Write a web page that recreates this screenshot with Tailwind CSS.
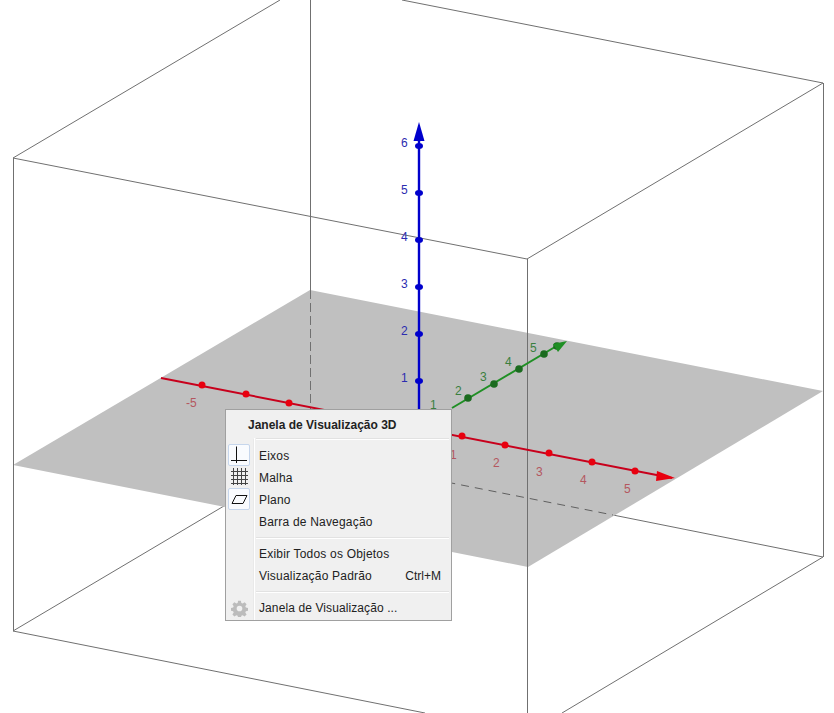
<!DOCTYPE html>
<html lang="en">
<head>
  <meta charset="UTF-8" />
  <title>Janela de Visualização 3D</title>
  <script src="https://cdn.jsdelivr.net/npm/@tailwindcss/browser@4"></script>
</head>
<body class="bg-white overflow-hidden">
<div class="relative w-[834px] h-[713px] overflow-hidden bg-white font-['Liberation_Sans',sans-serif]">

  <!-- 3D view -->
  <svg class="absolute inset-0" width="834" height="713" viewBox="0 0 834 713">
    <!-- box, back edges -->
    <g fill="none" stroke="#707070" stroke-width="1">
      <line x1="310.5" y1="0" x2="310.5" y2="290" />
      <line x1="13" y1="158" x2="280" y2="0" />
      <line x1="402" y1="0" x2="823" y2="83" />
      <line x1="13" y1="631" x2="310" y2="455" />
      <line x1="613" y1="515" x2="823" y2="557" />
    </g>

    <!-- xOy plane -->
    <polygon points="310,290 823,391 528,567 13,465" fill="#c0c0c0" />
    <line x1="310.5" y1="290" x2="310.5" y2="410" stroke="#707070" stroke-dasharray="9 4" />
    <line x1="310" y1="455" x2="613" y2="515" stroke="#606060" stroke-dasharray="8 6" />

    <!-- box, front edges -->
    <g fill="none" stroke="#707070" stroke-width="1">
      <line x1="13.5" y1="158" x2="13.5" y2="631" />
      <line x1="823.5" y1="83" x2="823.5" y2="557" />
      <line x1="527.5" y1="259" x2="527.5" y2="713" />
      <line x1="13" y1="158" x2="527" y2="259" />
      <line x1="527" y1="259" x2="823" y2="83" />
      <line x1="13" y1="631" x2="425" y2="713" />
      <line x1="562" y1="713" x2="823" y2="557" />
    </g>

    <!-- x axis -->
    <g fill="#e8000f">
      <line x1="161" y1="378" x2="672" y2="478" stroke="#c8001c" stroke-width="2" />
      <circle cx="202" cy="385" r="3.500" />
      <circle cx="246" cy="394" r="3.500" />
      <circle cx="289" cy="403" r="3.500" />
      <circle cx="462" cy="436" r="3.500" />
      <circle cx="505" cy="445" r="3.500" />
      <circle cx="549" cy="453" r="3.500" />
      <circle cx="592" cy="462" r="3.500" />
      <circle cx="635" cy="471" r="3.500" />
      <polygon points="675,478 657,471 656,481" />
    </g>
    <g fill="#b4575f" font-size="12">
      <text x="186" y="407">-5</text>
      <text x="450" y="459">1</text>
      <text x="493" y="467">2</text>
      <text x="536" y="476">3</text>
      <text x="580" y="484">4</text>
      <text x="624" y="493">5</text>
    </g>

    <!-- y axis -->
    <g fill="#1b6b1f">
      <line x1="452" y1="408" x2="560" y2="344" stroke="#1f8f24" stroke-width="2" />
      <circle cx="468" cy="398" r="3.800" />
      <circle cx="494" cy="384" r="3.800" />
      <circle cx="519" cy="369" r="3.800" />
      <circle cx="544" cy="354" r="3.800" />
      <circle cx="557" cy="346" r="3.800" />
      <polygon points="567,341 553,344 558,352" fill="#1f8f24" />
    </g>
    <g fill="#3a7f3e" font-size="12">
      <text x="430" y="409">1</text>
      <text x="455" y="395">2</text>
      <text x="480" y="381">3</text>
      <text x="505" y="366">4</text>
      <text x="530" y="352">5</text>
    </g>

    <!-- z axis -->
    <g fill="#0000cc">
      <line x1="419" y1="140" x2="419" y2="412" stroke="#0000cc" stroke-width="2.400" />
      <ellipse cx="419" cy="146" rx="4" ry="3" />
      <ellipse cx="419" cy="193" rx="4" ry="3" />
      <ellipse cx="419" cy="240" rx="4" ry="3" />
      <ellipse cx="419" cy="287" rx="4" ry="3" />
      <ellipse cx="419" cy="334" rx="4" ry="3" />
      <ellipse cx="419" cy="381" rx="4" ry="3" />
      <polygon points="419,122 424.500,141 413.500,141" />
    </g>
    <g fill="#2c2cb0" font-size="12">
      <text x="401" y="147">6</text>
      <text x="401" y="194">5</text>
      <text x="401" y="241">4</text>
      <text x="401" y="288">3</text>
      <text x="401" y="335">2</text>
      <text x="401" y="382">1</text>
    </g>
  </svg>

  <!-- Context menu -->
  <div class="absolute left-[225px] top-[409px] w-[227px] h-[212px] border border-[#a0a0a0] bg-[#f0f0f0] text-[12px] text-[#222]">
    <div class="h-[29px] pl-[22px] flex items-center font-bold">Janela de Visualização 3D</div>

    <div class="flex h-[181px]">
      <!-- icon column -->
      <div class="w-[28px] shrink-0 border-r border-[#e9e9e9] flex flex-col">
        <div class="h-[5px]"></div>
        <div class="h-[22px] w-[22px] ml-[2px] flex items-center justify-center rounded-[2px] border border-[#c6d6ec] bg-[#f9fbfe]">
          <svg width="18" height="18" viewBox="0 0 18 18" fill="none" stroke="#111">
            <path d="M6.500 0.500V17M1 14.500H17" />
          </svg>
        </div>
        <div class="h-[22px] w-[22px] ml-[2px] flex items-center justify-center">
          <svg width="18" height="18" viewBox="0 0 18 18" fill="none" stroke="#444">
            <path d="M3.500 0V17M7.500 0V17M11.500 0V17M15.500 0V17M1 3.500H18M1 7.500H18M1 11.500H18M1 15.500H18" />
          </svg>
        </div>
        <div class="h-[22px] w-[22px] ml-[2px] flex items-center justify-center rounded-[2px] border border-[#c6d6ec] bg-[#f9fbfe]">
          <svg width="18" height="12" viewBox="0 0 18 12" fill="none" stroke="#111">
            <path d="M6 2.500H17L13 10.500H2Z" />
          </svg>
        </div>
        <div class="mt-auto mb-[3px] ml-[5px]">
          <svg width="17" height="17" viewBox="0 0 24 24" fill="#bcbcbc">
            <path fill-rule="evenodd" d="M10 1h4l.6 3.200 1.900.8 2.700-1.800 2.800 2.800-1.800 2.700.8 1.900 3 .6v4l-3 .6-.8 1.900 1.800 2.700-2.800 2.800-2.700-1.800-1.900.8-.6 3h-4l-.6-3-1.900-.8-2.700 1.800-2.800-2.800 1.800-2.700-.8-1.900-3-.6v-4l3-.6.8-1.900-1.800-2.700 2.800-2.800 2.700 1.800 1.900-.8zM12 8a4 4 0 1 0 0 8 4 4 0 0 0 0-8z" />
          </svg>
        </div>
      </div>

      <!-- labels -->
      <div class="flex-1 border-l border-white flex flex-col -mt-[1px]">
        <div class="h-[2px] ml-[1px] mr-[2px] border-t border-[#e2e2e2] bg-white"></div>
        <div class="h-[5px]"></div>
        <div class="h-[22px] pl-[4px] flex items-center tracking-[0.2px]">Eixos</div>
        <div class="h-[22px] pl-[4px] flex items-center tracking-[0.2px]">Malha</div>
        <div class="h-[22px] pl-[4px] flex items-center tracking-[0.2px]">Plano</div>
        <div class="h-[22px] pl-[4px] flex items-center tracking-[0.2px]">Barra de Navegação</div>
        <div class="h-[4px]"></div>
        <div class="h-[2px] ml-[1px] mr-[2px] border-t border-[#e2e2e2] bg-white"></div>
        <div class="h-[4px]"></div>
        <div class="h-[22px] pl-[4px] flex items-center tracking-[0.2px]">Exibir Todos os Objetos</div>
        <div class="h-[22px] pl-[4px] pr-[10px] flex items-center justify-between"><span class="tracking-[0.2px]">Visualização Padrão</span><span>Ctrl+M</span></div>
        <div class="h-[4px]"></div>
        <div class="h-[2px] ml-[1px] mr-[2px] border-t border-[#e2e2e2] bg-white"></div>
        <div class="h-[4px]"></div>
        <div class="h-[22px] pl-[4px] flex items-center tracking-[0.1px]">Janela de Visualização ...</div>
      </div>
    </div>
  </div>
</div>
</body>
</html>
